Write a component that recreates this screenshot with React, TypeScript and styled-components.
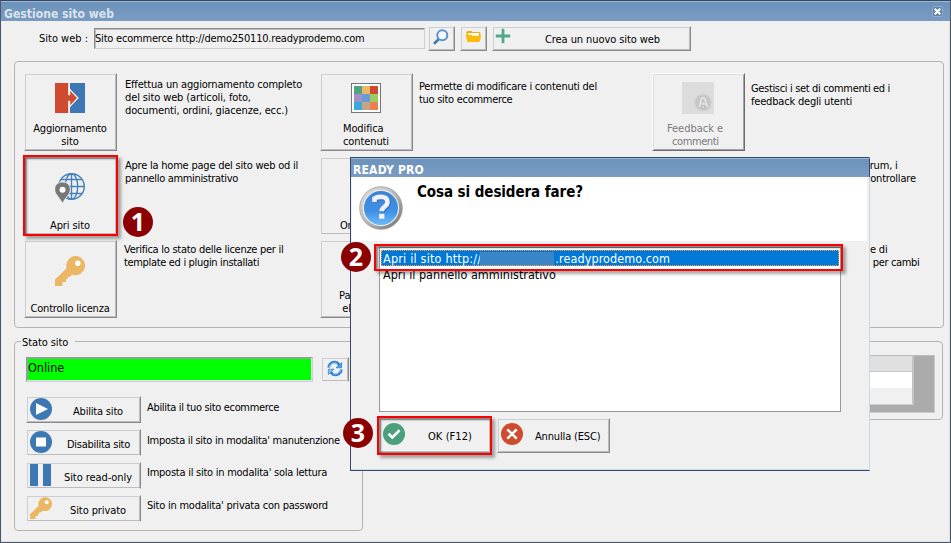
import React from 'react';
import styled, { createGlobalStyle, css } from 'styled-components';

const Global = createGlobalStyle`
  * { box-sizing: border-box; }
  body { margin: 0; background: #f0f0f0; overflow: hidden; }
  svg { display: block; flex: none; }
`;

const Window = styled.div`
  position: relative;
  width: 951px;
  height: 543px;
  display: flex;
  flex-direction: column;
  background: #f0f0f0;
  border: 1px solid #4e5864;
  border-top-color: #34465c;
  box-shadow: inset -1px -1px 0 #dde1e6, inset 1px 0 0 #e6e8ea;
  font: 11px/13px 'DejaVu Sans Condensed', 'DejaVu Sans', sans-serif;
  color: #000;
  white-space: nowrap;
`;

const TitleBar = styled.div`
  height: 20px;
  flex: none;
  display: flex;
  align-items: center;
  justify-content: space-between;
  padding: 4px 7px 0 3px;
  border-top: 1px solid #9db9d6;
  background: linear-gradient(#6c92bb, #7a9cc3);
  font-size: 12px;
  font-weight: bold;
  line-height: 14px;
  color: #dce3ec;
`;

const CloseButton = styled.span`
  width: 11px;
  height: 11px;
  margin-top: -4px;
  display: grid;
  place-items: center;
  border: 1px solid #8fabcb;
  border-radius: 2px;
  background: #6285ac;
`;

const T = styled.span<{ $ls?: number }>`
  display: block;
  letter-spacing: ${(p) => p.$ls ?? -0.2}px;
`;

const Toolbar = styled.div`
  height: 40px;
  flex: none;
  display: flex;
  align-items: flex-start;
  padding: 5px 0 0 38px;
`;

const ToolbarLabel = styled.div`
  width: 55px;
  padding-top: 6px;
`;

const Field = styled.div`
  width: 331px;
  height: 21px;
  margin: 2px 3px 0 0;
  padding: 3px 0 0 0;
  border: 1px solid #cfd0d4;
  border-top-color: #8c8c8c;
  border-left-color: #8c8c8c;
  box-shadow: inset 1px 1px 0 #bdbdbd;
`;

const raised = css<{ $flat?: boolean }>`
  border: 1px solid transparent;
  border-right-color: #898989;
  border-bottom-color: ${(p) => (p.$flat ? 'transparent' : '#898989')};
  box-shadow: inset 1px 1px 0 #cdced3, inset -1px -1px 0 #bcbcbe;
`;

const IconButton = styled.div<{ $w: number; $gap?: number; $top?: number }>`
  ${raised}
  width: ${(p) => p.$w}px;
  height: 25px;
  flex: none;
  margin-right: ${(p) => p.$gap ?? 0}px;
  display: flex;
  justify-content: center;
  padding-top: ${(p) => p.$top ?? 1}px;
`;

const WideButton = styled.div<{ $w: number; $h: number; $textTop: number; $indent: number; $pad?: number }>`
  ${raised}
  width: ${(p) => p.$w}px;
  height: ${(p) => p.$h}px;
  flex: none;
  display: flex;
  padding: 1px ${(p) => p.$pad ?? 2}px;

  & > ${T} {
    margin: ${(p) => p.$textTop}px 0 0 ${(p) => p.$indent}px;
  }
`;

const Panel = styled.div`
  border: 1px solid #b3b3b3;
  border-radius: 4px;
`;

const ToolsPanel = styled(Panel)`
  width: 930px;
  height: 267px;
  flex: none;
  margin-left: 13px;
  padding: 11px 0 0 9px;
  display: grid;
  grid-template-columns: 296px 332px 1fr;
  grid-template-rows: 84px 83px 78px;
`;

const Cell = styled.div`
  display: flex;
  align-items: flex-start;
`;

const Tile = styled.div<{ $iconTop: number; $disabled?: boolean }>`
  ${raised}
  width: 93px;
  height: 78px;
  flex: none;
  display: flex;
  flex-direction: column;
  align-items: center;
  justify-content: space-between;
  padding: ${(p) => p.$iconTop - 1}px 1px 2px 0;
  ${(p) =>
    p.$disabled &&
    css`
      color: #7d7982;
      border-color: #fff #6c6c6c #6c6c6c #fff;
      box-shadow: inset 1px 1px 0 #dcdcdc, inset -1px -1px 0 #a2a2a2;
    `}
`;

const Caption = styled.div<{ $left?: number }>`
  display: flex;
  flex-direction: column;
  align-items: ${(p) => (p.$left === undefined ? 'center' : 'flex-start')};
  ${(p) => p.$left !== undefined && `align-self: flex-start; margin-left: ${p.$left}px;`}
`;

const Desc = styled.div<{ $top: number; $gap?: number }>`
  margin: ${(p) => p.$top}px 0 0 ${(p) => p.$gap ?? 8}px;
`;

const LowerRow = styled.div`
  display: flex;
  justify-content: space-between;
  padding: 13px 7px 0 13px;
`;

const StatusPanel = styled(Panel)`
  width: 349px;
  height: 190px;
  padding: 0 0 0 11px;
`;

const Legend = styled.div`
  width: 54px;
  height: 13px;
  margin: -7px 0 9px -5px;
  padding: 1px 0 0 1px;
  background: #f0f0f0;
`;

const StatusLine = styled.div`
  display: flex;
  justify-content: space-between;
  width: 323px;
  margin-bottom: 14px;
`;

const OnlineBox = styled.div`
  width: 287px;
  height: 25px;
  padding: 3px 0 0 1px;
  background: #0f0;
  border: 1px solid #cfd0d4;
  border-top-color: #9a9a9a;
  border-left-color: #9a9a9a;
  box-shadow: inset -1px -1px 0 #e3e3ea, inset 1px 1px 0 #7fae8a;
  font-size: 12.5px;
`;

const ActionRow = styled.div`
  height: 33px;
  display: flex;
  align-items: flex-start;
`;

const GridPanel = styled(Panel)`
  width: 300px;
  height: 79px;
  display: flex;
  justify-content: flex-end;
  padding: 13px 7px 0 0;
`;

const GridArea = styled.div`
  width: 270px;
  height: 58px;
  padding-right: 20px;
  background: #ababab;
  border: 1px solid #cbcbcb;
  border-top-color: #bdbdbd;
`;

const GridBody = styled.div`
  height: 49px;
  display: grid;
  grid-template-rows: 16px 16px 16px;
  background: #f0f0f0;
  border-right: 2px solid #c4c4c4;
  border-bottom: 1px solid #d0d0d0;
`;

const GridHead = styled.div`
  background: #e0e0e0;
  border-bottom: 1px solid #c8c8c8;
`;

const GridLine = styled.div`
  background: #fff;
`;

const Dialog = styled.div`
  position: absolute;
  left: 349px;
  top: 156px;
  width: 520px;
  height: 314px;
  display: flex;
  flex-direction: column;
  background: #f0f0f0;
  border: 1px solid #34496a;
  border-right-color: #cdd8e0;
  box-shadow: inset 0 -1px 0 #cfdbe4;
`;

const DialogTitle = styled.div`
  height: 19px;
  flex: none;
  padding: 4px 0 0 2px;
  margin-right: -1px;
  border-top: 1px solid #9db9d6;
  border-right: 1px solid #34496a;
  background: linear-gradient(#6c92bb, #7a9cc3);
  font-size: 12px;
  font-weight: bold;
  line-height: 14px;
  color: #fff;
`;

const DialogHeader = styled.div`
  height: 64px;
  flex: none;
  margin: 0 2px 0 1px;
  display: flex;
  padding: 9px 0 0 7px;
  background: #fff;
`;

const Heading = styled.div`
  margin: -3px 0 0 14px;
  font-size: 15px;
  font-weight: bold;
  line-height: 18px;
`;

const ListBox = styled.div`
  width: 462px;
  height: 165px;
  flex: none;
  margin: 6px 0 6px 28px;
  padding: 2px 1px;
  background: #fff;
  border: 1px solid #999;
  font-size: 12.5px;
  line-height: 16px;
`;

const ListItem = styled.div<{ $selected?: boolean }>`
  height: 16px;
  display: flex;
  align-items: center;
  padding: 2px 0 0 2px;
  ${(p) =>
    p.$selected &&
    css`
      color: #fff;
      background: #0078d7;
      outline: 1px dotted #ff9a3c;
      outline-offset: -1px;
    `}
`;

const Redacted = styled.span`
  width: 74px;
  height: 14px;
  margin: 0 1px 0 -1px;
  background: #3a85c7;
`;

const DialogButtons = styled.div`
  display: flex;
  gap: 6px;
  padding-left: 28px;
`;

const DialogIcon = styled.span`
  padding: 3px 0 0 1px;
`;

const Highlight = styled.div<{ $x: number; $y: number; $w: number; $h: number }>`
  position: absolute;
  left: ${(p) => p.$x - 1}px;
  top: ${(p) => p.$y - 1}px;
  width: ${(p) => p.$w}px;
  height: ${(p) => p.$h}px;
  border: 2px solid #fe0000;
  box-shadow: 3px 3px 3px rgba(0, 0, 0, 0.34), inset 2px 2px 2px rgba(0, 0, 0, 0.45);
`;

const Badge = styled.div<{ $x: number; $y: number }>`
  position: absolute;
  left: ${(p) => p.$x - 1}px;
  top: ${(p) => p.$y - 1}px;
  width: 30px;
  height: 30px;
  border-radius: 50%;
  background: #8b0000;
  color: #fff;
  font: bold 25px/28px 'Noto Sans', 'Open Sans', sans-serif;
  text-align: center;
`;

const SyncIcon = () => (
  <svg width="16" height="17" viewBox="0 0 16 17">
    <path d="M1.500 7.500C2 3.500 6 .8 10.200 2.600L12.300 5" fill="none" stroke="#2f7fd0" strokeWidth="2.600" />
    <path d="M2.200 7C3 4 6.500 1.800 9.800 3.200" fill="none" stroke="#7cc4f8" strokeWidth="1" />
    <path d="M14.600 2.500v5.300H9z" fill="#43a0ea" stroke="#2168bb" strokeWidth=".6" />
    <path d="M14.500 9.500C14 13.500 10 16.200 5.800 14.400L3.700 12" fill="none" stroke="#2f7fd0" strokeWidth="2.600" />
    <path d="M13.800 10C13 13 9.500 15.200 6.200 13.800" fill="none" stroke="#7cc4f8" strokeWidth="1" />
    <path d="M1.400 14.500V9.200H7z" fill="#7cc4f8" stroke="#2168bb" strokeWidth=".6" />
  </svg>
);

const SearchIcon = () => (
  <svg width="17" height="17" viewBox="0 0 17 17">
    <path d="M6 10.800L1.800 15" stroke="#3c78b4" strokeWidth="2.600" strokeLinecap="round" />
    <circle cx="9.300" cy="7.200" r="5" fill="#f7fafd" stroke="#5c93cc" strokeWidth="2" />
  </svg>
);

const FolderIcon = () => (
  <svg width="17" height="16" viewBox="0 0 17 16">
    <path d="M1.500 4.500q0-1.500 1.500-1.500h3.500l1 1H14q1.500 0 1.500 1.500V8h-14z" fill="#f0ad12" />
    <path d="M3 5h11v3H3z" fill="#fff" />
    <path d="M.8 6.800h5.500l1 .9h8.900l-1.200 5.300q-.2 1-1.200 1H3.200q-1 0-1.200-1z" fill="#fdbc0c" />
  </svg>
);

const PlusIcon = () => (
  <svg width="16" height="16" viewBox="0 0 16 16">
    <path d="M8 .8v14.400M.8 8h14.400" stroke="#4fa888" strokeWidth="2.800" />
  </svg>
);

const TransferIcon = () => (
  <svg width="30" height="30" viewBox="0 0 30 30">
    <path d="M0 0h13.500v30H0z" fill="#cf4b2f" />
    <path d="M15 0h15v30H15z" fill="#3c78b4" />
    <path d="M14.200 0v30" stroke="#f0f0f0" strokeWidth="1.500" />
    <path d="M13.500 4.300L23.800 15l-10.300 10.700z" fill="#f4f4f4" />
    <path d="M15 7.500v15" stroke="#3c78b4" strokeWidth="0" />
    <path d="M11 12.200h4.200V7.800L22 15l-6.800 7.200v-4.400H11z" fill="#cf4b2f" />
  </svg>
);

const swatches = ['#4fa383', '#eab765', '#cf4b2f', '#a58fc9', '#6b9ad6', '#9dcb63', '#38aadc', '#c6a48a', '#ea8152'];
const PaletteIcon = () => (
  <svg width="30" height="30" viewBox="0 0 30 30">
    <rect x=".5" y=".5" width="29" height="29" fill="#fff" stroke="#777" />
    {swatches.map((c, i) => (
      <rect key={c} x={3 + (i % 3) * 8} y={3 + Math.floor(i / 3) * 8} width="8" height="8" fill={c} />
    ))}
  </svg>
);

const FeedbackIcon = () => (
  <svg width="32" height="32" viewBox="0 0 32 32">
    <path d="M0 0h32v32H0z" fill="#dcdcdc" />
    <circle cx="21" cy="20.500" r="8" fill="#c6c6c6" stroke="#cecece" strokeWidth="1.500" strokeDasharray="2 1" />
    <path d="M17.500 25l2-9h3l3 9M19 22h5" fill="none" stroke="#e4e4e4" strokeWidth="1.500" />
    <circle cx="21" cy="25" r="1.600" fill="#ddd" stroke="#b8b8b8" />
  </svg>
);

const GlobeIcon = () => (
  <svg width="30" height="30" viewBox="0 0 30 30">
    <g fill="none" stroke="#4681bb" strokeWidth="1.400">
      <circle cx="16.500" cy="13.500" r="12.800" />
      <ellipse cx="16.500" cy="13.500" rx="6.200" ry="12.800" />
      <path d="M16.500 .7v25.600M3.700 13.500h25.600M6 6.500h21M6 20.500h21" />
    </g>
    <path d="M7.500 9C2.500 9-.6 12.500-.3 16.800 0 21.400 5 25 7.500 30.500 10 25 15 21.400 15.300 16.800 15.600 12.500 12.500 9 7.500 9z" fill="#787878" stroke="#f0f0f0" strokeWidth=".8" />
    <circle cx="7.500" cy="16.800" r="3" fill="#fff" />
  </svg>
);

const KeyIcon = ({ size = 30 }: { size?: number }) => (
  <svg width={size} height={size} viewBox="0 0 30 30">
    <path
      d="M20.500 0a9.600 9.600 0 1 1-3.400 18.600L15 20.700h-2.300V23H11v3H7.500v3.500L7 30H0v-6.500L11.600 12.200A9.600 9.600 0 0 1 20.500 0z"
      fill="#ebb765"
    />
    <circle cx="22.800" cy="7.300" r="2.700" fill="#fff" />
  </svg>
);

const PlayIcon = () => (
  <svg width="22" height="22" viewBox="0 0 22 22">
    <circle cx="11" cy="11" r="11" fill="#3c78b4" />
    <path d="M6 5l12 6-12 6z" fill="#fff" />
  </svg>
);

const StopIcon = () => (
  <svg width="22" height="22" viewBox="0 0 22 22">
    <circle cx="11" cy="11" r="11" fill="#3c78b4" />
    <path d="M6 6.500h10v9H6z" fill="#fff" />
  </svg>
);

const PauseIcon = () => (
  <svg width="22" height="22" viewBox="0 0 22 22">
    <path d="M0 0h8v22H0zM13 0h8v22h-8z" fill="#3c78b4" />
  </svg>
);

const CheckIcon = () => (
  <svg width="22" height="22" viewBox="0 0 22 22">
    <circle cx="11" cy="11" r="11" fill="#4b9f7d" />
    <path d="M5.500 10.800l3.800 3.700 7.300-7.200" fill="none" stroke="#fff" strokeWidth="2.600" />
  </svg>
);

const CancelIcon = () => (
  <svg width="22" height="22" viewBox="0 0 22 22">
    <circle cx="11" cy="11" r="11" fill="#cf4b2f" />
    <path d="M6.300 6.300l9.400 9.400M15.700 6.300l-9.400 9.400" stroke="#fff" strokeWidth="2.600" />
  </svg>
);

const QuestionIcon = () => (
  <svg width="44" height="44" viewBox="0 0 44 44">
    <defs>
      <linearGradient id="rim" x1="0" y1="0" x2="1" y2="1">
        <stop offset="0" stopColor="#e6e6e6" />
        <stop offset=".5" stopColor="#b9b9b9" />
        <stop offset="1" stopColor="#6b6b6b" />
      </linearGradient>
      <linearGradient id="disc" x1="0" y1="0" x2="0" y2="1">
        <stop offset="0" stopColor="#3b82d2" />
        <stop offset=".6" stopColor="#3f92e6" />
        <stop offset="1" stopColor="#6dbdfa" />
      </linearGradient>
    </defs>
    <circle cx="22" cy="22" r="21.300" fill="url(#rim)" stroke="#9a9a9a" strokeWidth=".8" />
    <circle cx="22" cy="22" r="17.600" fill="url(#disc)" stroke="#ececec" strokeWidth="1.200" />
    <path d="M16.500 16.500v-3.200c4-2.600 13-2.400 13 3.400 0 5-6 4.600-6 9.500" fill="none" stroke="#28599c" strokeWidth="5.200" opacity=".45" />
    <path d="M15.500 16v-3.500c4-2.600 13-2.400 13 3.400 0 5-5.800 4.600-5.800 9.300" fill="none" stroke="#f2f0ff" strokeWidth="4.600" />
    <path d="M20 27.800h5.400v5H20z" fill="#f2f0ff" />
  </svg>
);

const CloseGlyph = () => (
  <svg width="7" height="7" viewBox="0 0 7 7">
    <path d="M.7 .7l5.600 5.600M6.300 .7L.7 6.300" stroke="#fff" strokeWidth="2" />
  </svg>
);

type Line = [string, number];
const Lines = ({ items }: { items: Line[] }) => (
  <>
    {items.map(([text, ls]) => (
      <T key={text} $ls={ls}>{text}</T>
    ))}
  </>
);

interface Action {
  icon: React.ReactNode;
  label: Line;
  indent: number;
  flat?: boolean;
  text: Line;
  top: number;
}

const actions: Action[] = [
  { icon: <PlayIcon />, label: ['Abilita sito', -0.19], indent: 21, text: ['Abilita il tuo sito ecommerce', -0.33], top: 5 },
  { icon: <StopIcon />, label: ['Disabilita sito', -0.27], indent: 15, flat: true, text: ["Imposta il sito in modalita' manutenzione", -0.3], top: 5 },
  { icon: <PauseIcon />, label: ['Sito read-only', -0.08], indent: 12, flat: true, text: ["Imposta il sito in modalita' sola lettura", -0.25], top: 4 },
  { icon: <KeyIcon size={22} />, label: ['Sito privato', -0.09], indent: 18, flat: true, text: ["Sito in modalita' privata con password", -0.23], top: 4 },
];

export default function App() {
  return (
    <Window>
      <Global />
      <TitleBar>
        <T $ls={0.05}>Gestione sito web</T>
        <CloseButton><CloseGlyph /></CloseButton>
      </TitleBar>

      <Toolbar>
        <ToolbarLabel><T $ls={-0.01}>Sito web :</T></ToolbarLabel>
        <Field><T $ls={-0.2}>Sito ecommerce http://demo250110.readyprodemo.com</T></Field>
        <IconButton $w={27} $gap={5}><SearchIcon /></IconButton>
        <IconButton $w={27} $gap={5}><FolderIcon /></IconButton>
        <WideButton $w={199} $h={25} $textTop={5} $indent={34}>
          <PlusIcon />
          <T $ls={-0.08}>Crea un nuovo sito web</T>
        </WideButton>
      </Toolbar>

      <ToolsPanel>
        <Cell>
          <Tile $iconTop={10}>
            <TransferIcon />
            <Caption><Lines items={[['Aggiornamento', -0.22], ['sito', -0.1]]} /></Caption>
          </Tile>
          <Desc $top={5}>
            <Lines items={[['Effettua un aggiornamento completo', -0.18], ['del sito web (articoli, foto,', -0.12], ['documenti, ordini, giacenze, ecc.)', -0.14]]} />
          </Desc>
        </Cell>
        <Cell>
          <Tile $iconTop={10}>
            <PaletteIcon />
            <Caption $left={22}><Lines items={[['Modifica', -0.11], ['contenuti', -0.1]]} /></Caption>
          </Tile>
          <Desc $top={7} $gap={6}>
            <Lines items={[['Permette di modificare i contenuti del', -0.24], ['tuo sito ecommerce', -0.29]]} />
          </Desc>
        </Cell>
        <Cell>
          <Tile $iconTop={9} $disabled>
            <FeedbackIcon />
            <Caption $left={14}><Lines items={[['Feedback e', -0.03], ['\u2002\u200acommenti', -0.42]]} /></Caption>
          </Tile>
          <Desc $top={9} $gap={6}>
            <Lines items={[['Gestisci i set di commenti ed i', -0.34], ['feedback degli utenti', -0.19]]} />
          </Desc>
        </Cell>

        <Cell>
          <Tile $iconTop={16}>
            <GlobeIcon />
            <Caption><T $ls={-0.09}>Apri sito</T></Caption>
          </Tile>
          <Desc $top={2}>
            <Lines items={[['Apre la home page del sito web od il', -0.22], ['pannello amministrativo', -0.33]]} />
          </Desc>
        </Cell>
        <Cell>
          <Tile $iconTop={16} $flat>
            <span />
            <Caption $left={19}><T>Ord</T></Caption>
          </Tile>
        </Cell>
        <Cell>
          <Tile $iconTop={16} $disabled />
          <Desc $top={2} $gap={120}>
            <Lines items={[['\u2002rum, i', -0.2], ['controllare', -0.2]]} />
          </Desc>
        </Cell>

        <Cell>
          <Tile $iconTop={16}>
            <KeyIcon />
            <Caption><T $ls={-0.19}>Controllo licenza</T></Caption>
          </Tile>
          <Desc $top={3} $gap={7}>
            <Lines items={[['Verifica lo stato delle licenze per il', -0.27], ['template ed i plugin installati', -0.33]]} />
          </Desc>
        </Cell>
        <Cell>
          <Tile $iconTop={16}>
            <span />
            <Caption $left={18}><Lines items={[['Pa', 0], ['\u00a0el', 0]]} /></Caption>
          </Tile>
        </Cell>
        <Cell>
          <Tile $iconTop={16} $disabled />
          <Desc $top={3} $gap={125}>
            <Lines items={[['e di', -0.2], ['\u00a0per cambi', -0.35]]} />
          </Desc>
        </Cell>
      </ToolsPanel>

      <LowerRow>
        <StatusPanel>
          <Legend><T $ls={-0.1}>Stato sito</T></Legend>
          <StatusLine>
            <OnlineBox><T $ls={0}>Online</T></OnlineBox>
            <IconButton $w={28} $flat $top={2}><SyncIcon /></IconButton>
          </StatusLine>
          {actions.map((a) => (
            <ActionRow key={a.label[0]}>
              <WideButton $w={115} $h={27} $textTop={7} $indent={a.indent} $pad={3} $flat={a.flat}>
                {a.icon}
                <T $ls={a.label[1]}>{a.label[0]}</T>
              </WideButton>
              <Desc $top={a.top} $gap={6}><T $ls={a.text[1]}>{a.text[0]}</T></Desc>
            </ActionRow>
          ))}
        </StatusPanel>
        <GridPanel>
          <GridArea>
            <GridBody><GridHead /><GridLine /></GridBody>
          </GridArea>
        </GridPanel>
      </LowerRow>

      <Dialog>
        <DialogTitle><T $ls={0.2}>READY PRO</T></DialogTitle>
        <DialogHeader>
          <QuestionIcon />
          <Heading><T $ls={-0.08}>Cosa si desidera fare?</T></Heading>
        </DialogHeader>
        <ListBox>
          <ListItem $selected>
            <T $ls={0.2}>Apri il sito http://</T>
            <Redacted />
            <T $ls={0.1}>.readyprodemo.com</T>
          </ListItem>
          <ListItem><T $ls={0}>Apri il pannello amministrativo</T></ListItem>
        </ListBox>
        <DialogButtons>
          <WideButton $w={112} $h={35} $textTop={10} $indent={23}>
            <DialogIcon><CheckIcon /></DialogIcon>
            <T $ls={0.07}>OK (F12)</T>
          </WideButton>
          <WideButton $w={113} $h={35} $textTop={10} $indent={12}>
            <DialogIcon><CancelIcon /></DialogIcon>
            <T $ls={-0.16}>Annulla (ESC)</T>
          </WideButton>
        </DialogButtons>
      </Dialog>

      <Highlight $x={23} $y={155} $w={95} $h={81} />
      <Highlight $x={374} $y={244} $w={469} $h={27} />
      <Highlight $x={377} $y={416} $w={115} $h={39} />
      <Badge $x={123} $y={207}>1</Badge>
      <Badge $x={341} $y={242}>2</Badge>
      <Badge $x={343} $y={418}>3</Badge>
    </Window>
  );
}
